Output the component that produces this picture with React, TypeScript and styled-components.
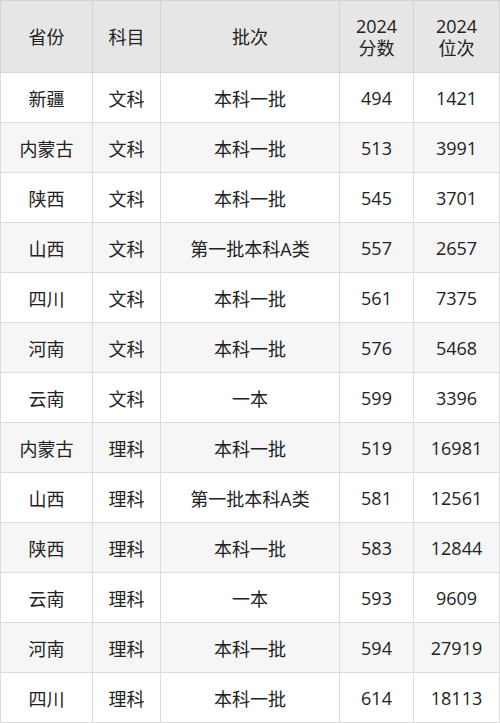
import styled, { createGlobalStyle } from "styled-components";

const rows: [string, string, string, string, string][] = [
    ["新疆", "文科", "本科一批", "494", "1421"],
    ["内蒙古", "文科", "本科一批", "513", "3991"],
    ["陕西", "文科", "本科一批", "545", "3701"],
    ["山西", "文科", "第一批本科A类", "557", "2657"],
    ["四川", "文科", "本科一批", "561", "7375"],
    ["河南", "文科", "本科一批", "576", "5468"],
    ["云南", "文科", "一本", "599", "3396"],
    ["内蒙古", "理科", "本科一批", "519", "16981"],
    ["山西", "理科", "第一批本科A类", "581", "12561"],
    ["陕西", "理科", "本科一批", "583", "12844"],
    ["云南", "理科", "一本", "593", "9609"],
    ["河南", "理科", "本科一批", "594", "27919"],
    ["四川", "理科", "本科一批", "614", "18113"],
];

const widths = [92, 68, 179, 74, 86];

export default function App() {
    return (
        <>
            <GlobalStyle />
            <Table>
                <colgroup>
                    {widths.map((w, i) => <col key={i} style={{ width: w }} />)}
                </colgroup>
                <thead>
                    <tr>
                        <Th>省份</Th>
                        <Th>科目</Th>
                        <Th>批次</Th>
                        <Th>2024<br />分数</Th>
                        <Th>2024<br />位次</Th>
                    </tr>
                </thead>
                <tbody>
                    {rows.map((r, i) => (
                        <Row key={i} $shaded={i % 2 === 1}>
                            {r.map((c, j) => <Td key={j}>{c}</Td>)}
                        </Row>
                    ))}
                </tbody>
            </Table>
        </>
    )
}

const GlobalStyle = createGlobalStyle`
    body {
        margin: 0;
        background: #fff;
        font-family: "Open Sans", "Noto Sans CJK SC", sans-serif;
        color: #222;
    }
`
const Table = styled.table`
    width: 499px;
    margin-left: 0;
    border-collapse: collapse;
    table-layout: fixed;
    font-size: 18px;
`
const Th = styled.th`
    height: 71px;
    padding: 0;
    background: #e6e6e6;
    border: 1px solid #d4d4d4;
    font-weight: normal;
    line-height: 22px;
    text-align: center;
    vertical-align: middle;
`
const Row = styled.tr<{ $shaded: boolean }>`
    background: ${p => (p.$shaded ? "#f6f6f6" : "#fff")};
`
const Td = styled.td`
    height: 49px;
    padding: 0;
    border: 1px solid #dcdcdc;
    text-align: center;
    vertical-align: middle;
`
